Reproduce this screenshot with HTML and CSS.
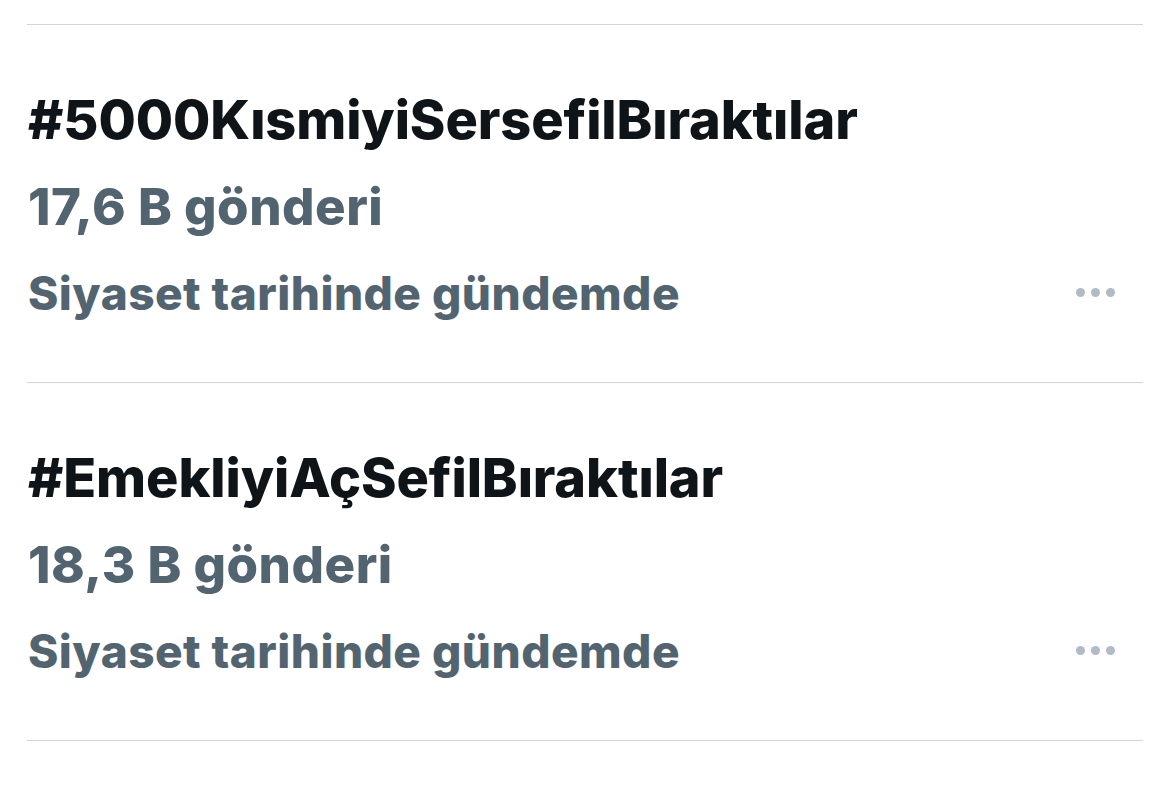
FILE: index.html
```html
<!DOCTYPE html>
<html lang="tr">
<head>
  <meta charset="UTF-8">
  <meta name="viewport" content="width=device-width, initial-scale=1.0">
  <title>Gündem</title>
  <link rel="stylesheet" href="styles.css">
</head>
<body>

  <ul class="trends">
    <li class="trend">
      <div class="trend-text">
        <div class="trend-name">#5000KısmiyiSersefilBıraktılar</div>
        <div class="trend-count">17,6 B gönderi</div>
        <div class="trend-meta">Siyaset tarihinde gündemde</div>
      </div>
      <button type="button" class="more" aria-label="Daha fazla">
        <span></span><span></span><span></span>
      </button>
    </li>
    <li class="trend">
      <div class="trend-text">
        <div class="trend-name">#EmekliyiAçSefilBıraktılar</div>
        <div class="trend-count">18,3 B gönderi</div>
        <div class="trend-meta">Siyaset tarihinde gündemde</div>
      </div>
      <button type="button" class="more" aria-label="Daha fazla">
        <span></span><span></span><span></span>
      </button>
    </li>
  </ul>

</body>
</html>
```

FILE: styles.css
```css
body {
  margin: 0;
  background: #fff;
  font-family: Inter, "Noto Sans", sans-serif;
}

ul.trends {
  list-style: none;
  margin: 24px 27px 0 27px;
  padding: 0;
  border-top: 1px solid #d2d5d8;
}

.trend {
  display: flex;
  align-items: flex-end;
  height: 357px;
  border-bottom: 1px solid #d2d5d8;
}

.trend-text {
  flex: 1;
  padding: 62px 0 0 1px;
  align-self: flex-start;
}

.trend-name {
  font-size: 54px;
  font-weight: 800;
  color: #0f1419;
  letter-spacing: -0.1px;
  line-height: 66px;
}

.trend-count {
  font-size: 51px;
  font-weight: 800;
  color: #536471;
  letter-spacing: 0.5px;
  line-height: 64px;
  margin-top: 22px;
}

.trend-meta {
  font-size: 46px;
  font-weight: 800;
  color: #536471;
  letter-spacing: 0.45px;
  line-height: 56px;
  margin-top: 26px;
}

.more {
  display: flex;
  gap: 6px;
  border: 0;
  background: none;
  padding: 0;
  margin: 0 28px 85px 0;
  cursor: pointer;
}

.more span {
  width: 9px;
  height: 9px;
  border-radius: 50%;
  background: #b0bbc5;
}
```
